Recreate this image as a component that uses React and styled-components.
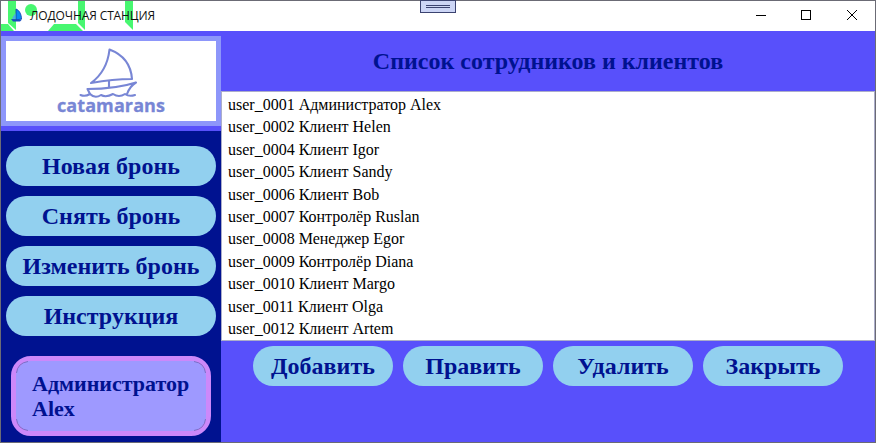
import React from "react";
import styled, { createGlobalStyle } from "styled-components";

const Global = createGlobalStyle`
  * { box-sizing: border-box; }
  body { margin: 0; overflow: hidden; }
`;

const Window = styled.div`
  position: relative;
  width: 876px;
  height: 443px;
  display: flex;
  flex-direction: column;
  border: 1px solid #6b6b75;
  background: #5850fb;
  font-family: "Liberation Serif", "Times New Roman", serif;
`;

const TitleBar = styled.header`
  position: relative;
  flex: none;
  height: 30px;
  display: flex;
  align-items: center;
  background: #fff;
`;

const SailIcon = styled.svg`
  position: relative;
  z-index: 1;
  width: 14px;
  height: 16px;
  margin: 0 0 3px 9px;
  flex: none;
`;

const WindowTitle = styled.span`
  position: relative;
  margin-left: 6px;
  flex: 1;
  color: #111;
  font: 12px/16px "Open Sans", "Noto Sans", sans-serif;
  letter-spacing: -0.12px;
  white-space: nowrap;
`;

const Controls = styled.svg`
  width: 138px;
  height: 30px;
  flex: none;
`;

const DigitOverlay = styled.svg`
  position: absolute;
  left: 0;
  top: 0;
  width: 140px;
  height: 30px;
`;

const Grip = styled.div`
  position: absolute;
  left: 419px;
  top: -1px;
  width: 36px;
  height: 13px;
  display: flex;
  flex-direction: column;
  align-items: center;
  justify-content: center;
  gap: 1px;
  border: 1px solid #3b4370;
  background: #ccd5f5;
`;

const GripLine = styled.i`
  width: 24px;
  height: 1px;
  background: #3b4370;
`;

const Body = styled.div`
  flex: 1;
  min-height: 0;
  display: flex;
`;

const Sidebar = styled.aside`
  width: 220px;
  flex: none;
  display: flex;
  flex-direction: column;
  background: #001290;
`;

const LogoArea = styled.div`
  height: 100px;
  flex: none;
  padding: 5px 0;
  background: #5850fb;
`;

const Logo = styled.div`
  height: 90px;
  display: flex;
  flex-direction: column;
  align-items: center;
  padding-top: 6px;
  border: 5px solid #8d96fa;
  background: #fff;
`;

const Boat = styled.svg`
  width: 60px;
  height: 52px;
  flex: none;
`;

const LogoName = styled.div`
  margin-top: -5px;
  color: #7886d5;
  font: 700 18px/22px "Open Sans", "Noto Sans", sans-serif;
  letter-spacing: 0.1px;
  -webkit-text-stroke: 0.3px #7886d5;
`;

const Menu = styled.nav`
  display: flex;
  flex-direction: column;
  gap: 10px;
  padding: 15px 5px 0;
`;

const PillButton = styled.button`
  width: ${(p) => p.$width};
  height: 40px;
  padding: 0;
  border: 0;
  border-radius: 20px;
  background: #92d0ef;
  color: #001290;
  font: 700 24px/40px "Liberation Serif", "Times New Roman", serif;
  white-space: nowrap;
`;

const UserCard = styled.div`
  position: relative;
  width: 200px;
  height: 80px;
  margin: 20px 0 0 10px;
  padding: 10px 0 0 16px;
  border: 5px solid #cc88fa;
  border-radius: 20px;
  background: #9e99ff;
  color: #001290;
  font-weight: 700;
  font-size: 22px;
  line-height: 25px;
`;

const CardCorners = styled.svg`
  position: absolute;
  left: 0;
  top: 0;
  width: 190px;
  height: 70px;
`;

const Main = styled.main`
  flex: 1;
  display: flex;
  flex-direction: column;
`;

const Heading = styled.h1`
  height: 60px;
  flex: none;
  margin: 0;
  color: #001290;
  text-align: center;
  font-size: 24px;
  line-height: 60px;
`;

const UserList = styled.ul`
  height: 250px;
  flex: none;
  margin: 0;
  padding: 2px 0 0 6px;
  border: 1px solid #abadca;
  background: #fff;
  list-style: none;
`;

const UserRow = styled.li`
  height: 22.4px;
  color: #000;
  font-size: 16px;
  line-height: 22.4px;
`;

const Actions = styled.div`
  display: flex;
  justify-content: center;
  gap: 10px;
  padding-top: 5px;
`;

const users = [
  "user_0001 Администратор Alex",
  "user_0002 Клиент Helen",
  "user_0004 Клиент Igor",
  "user_0005 Клиент Sandy",
  "user_0006 Клиент Bob",
  "user_0007 Контролёр Ruslan",
  "user_0008 Менеджер Egor",
  "user_0009 Контролёр Diana",
  "user_0010 Клиент Margo",
  "user_0011 Клиент Olga",
  "user_0012 Клиент Artem",
];

const menu = ["Новая бронь", "Снять бронь", "Изменить бронь", "Инструкция"];
const actions = ["Добавить", "Править", "Удалить", "Закрыть"];

export default function App() {
  return (
    <>
      <Global />
      <Window>
        <TitleBar>
          <SailIcon viewBox="0 0 14 16">
            <path d="M6 2C9 3 11.5 7 11.5 12L6 13Z" fill="#0a8cf0" stroke="#1238a8" strokeWidth=".8" />
            <path d="M5.5 6V12L2 11.5Z" fill="#49a8ee" />
            <path d="M1 12L12 12.5L10 14.5H3Z" fill="#174cc0" />
          </SailIcon>
          <DigitOverlay viewBox="1 1 140 30" fill="#2df65c" fillOpacity=".88">
            <path d="M8 1H16V30L8 23Z" />
            <circle cx="31" cy="10" r="6" />
            <path d="M1 24H8L14 31H1Z" />
            <path d="M78 1H85V30L78 23Z" />
            <path d="M54 24H76L83 31H48Z" />
            <path d="M125 1H133V30L125 22Z" />
          </DigitOverlay>
          <WindowTitle>ЛОДОЧНАЯ СТАНЦИЯ</WindowTitle>
          <Controls viewBox="737 1 138 30" fill="none" stroke="#000" strokeWidth="1">
            <path d="M756 15.5H766" />
            <rect x="801.5" y="10.5" width="9" height="9" />
            <path d="M847 10L857 20M857 10L847 20" />
          </Controls>
          <Grip>
            <GripLine />
            <GripLine />
          </Grip>
        </TitleBar>
        <Body>
          <Sidebar>
            <LogoArea>
              <Logo>
                <Boat
                  viewBox="81 47 60 52"
                  fill="none"
                  stroke="#7886d5"
                  strokeWidth="2.1"
                  strokeLinejoin="round"
                  strokeLinecap="round"
                  overflow="visible"
                >
                  <path d="M109.5 49.5C124 55 131 65 132 79Q113 79 91 83C102 75 108 63 109.5 49.5Z" />
                  <path d="M109 81V87M87.5 89Q116 89 136 82.5Q130 86 127 94M87.5 89L90 94" />
                  <path d="M80.5 95Q85 97 90 94Q95 99 101 95Q106 98 113 94Q119 98 125 94Q129 97 135 95" />
                </Boat>
                <LogoName>catamarans</LogoName>
              </Logo>
            </LogoArea>
            <Menu>
              {menu.map((label) => (
                <PillButton key={label} $width="210px">{label}</PillButton>
              ))}
            </Menu>
            <UserCard>
              <CardCorners viewBox="0 0 190 70" fill="none" stroke="#6f64b8" strokeWidth=".8">
                <path d="M.5 12Q1.5 2 12 .5M178 .5Q188.5 2 189.5 12M189.5 58Q188.5 68 178 69.5M12 69.5Q1.5 68 .5 58" />
              </CardCorners>
              Администратор
              <br />
              Alex
            </UserCard>
          </Sidebar>
          <Main>
            <Heading>Список сотрудников и клиентов</Heading>
            <UserList>
              {users.map((user) => (
                <UserRow key={user}>{user}</UserRow>
              ))}
            </UserList>
            <Actions>
              {actions.map((label) => (
                <PillButton key={label} $width="140px">{label}</PillButton>
              ))}
            </Actions>
          </Main>
        </Body>
      </Window>
    </>
  );
}
